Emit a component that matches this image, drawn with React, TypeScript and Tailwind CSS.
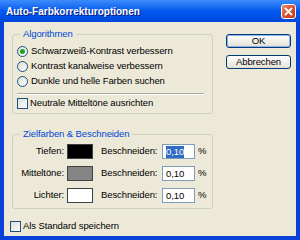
import React from 'react';

const font = "font-['Liberation_Sans',Arial,sans-serif]";

const Radio = ({ checked, label }: { checked?: boolean; label: string }) => (
    <label className="flex items-center h-[15px] gap-[3px]">
        <span className="w-[11px] h-[11px] rounded-full border border-[#1C5180] bg-gradient-to-br from-[#DCDCD7] to-white flex items-center justify-center">
            {checked && <span className="w-[5px] h-[5px] rounded-full bg-[#21A121]" />}
        </span>
        <span>{label}</span>
    </label>
);

const Checkbox = ({ label }: { label: string }) => (
    <label className="flex items-center h-[15px] gap-[2px]">
        <span className="w-[11px] h-[11px] border border-[#1C5180] bg-gradient-to-br from-[#DCDCD7] to-white" />
        <span>{label}</span>
    </label>
);

const ColorRow = ({ label, color, selected }: { label: string; color: string; selected?: boolean }) => (
    <div className="flex items-center h-[15px]">
        <span className="w-[54px] text-right pr-[3px]">{label}</span>
        <span className={`w-[26px] h-[15px] border border-[#404040] ${color}`} />
        <span className="ml-[8px] w-[61px]">Beschneiden:</span>
        <span className="w-[33px] h-[15px] border border-[#7F9DB9] bg-white flex items-center pl-[3px]">
            <span className={selected ? 'bg-[#316AC5] text-white leading-[12px]' : 'leading-[12px]'}>0,10</span>
        </span>
        <span className="ml-[3px]">%</span>
    </div>
);

const App: React.FC = () => {
    return (
        <div className={`w-[300px] h-[240px] bg-[#0842D8] flex flex-col ${font} text-[9.5px] tracking-[-0.1px] text-black`}>
            <div className="h-[22px] shrink-0 flex items-center justify-between pl-[6px] pr-[4px] bg-gradient-to-b from-[#3D8CFA] via-[#0058EE] to-[#0048DC]">
                <span className="text-white font-bold text-[10px] tracking-[0px] [text-shadow:1px_1px_0_#0A1883]">Auto-Farbkorrekturoptionen</span>
                <span className="w-[15px] h-[15px] rounded-[3px] border border-white bg-gradient-to-br from-[#E98B6E] via-[#D9502B] to-[#C23A14] flex items-center justify-center">
                    <svg width="9" height="9" viewBox="0 0 9 9">
                        <path d="M1.5 1.5 L7.5 7.5 M7.5 1.5 L1.5 7.5" stroke="white" strokeWidth="1.8" strokeLinecap="round" />
                    </svg>
                </span>
            </div>
            <div className="flex-1 mx-[4px] mb-[4px] bg-[#ECE9D8] flex">
                <div className="pl-[6px] pt-[6px] w-[209px] flex flex-col">
                    <fieldset className="ml-[2px] w-[201px] border border-[#D0D0BF] rounded-[3px] px-[4px] pb-[2px]">
                        <legend className="ml-[3px] px-[3px] text-[#0046D5] leading-[12px]">Algorithmen</legend>
                        <div className="flex flex-col mt-[4px]">
                            <Radio checked label="Schwarzweiß-Kontrast verbessern" />
                            <Radio label="Kontrast kanalweise verbessern" />
                            <Radio label="Dunkle und helle Farben suchen" />
                            <div className="mt-[4px] mb-[1px] mr-[4px] border-t border-[#ACA899] border-b border-b-white" />
                            <Checkbox label="Neutrale Mitteltöne ausrichten" />
                        </div>
                    </fieldset>
                    <fieldset className="ml-[2px] mt-[14px] w-[201px] border border-[#D0D0BF] rounded-[3px] pb-[5px]">
                        <legend className="ml-[7px] px-[3px] text-[#0046D5] leading-[12px]">Zielfarben &amp; Beschneiden</legend>
                        <div className="flex flex-col gap-[7px] mt-[4px]">
                            <ColorRow label="Tiefen:" color="bg-black" selected />
                            <ColorRow label="Mitteltöne:" color="bg-[#858585]" />
                            <ColorRow label="Lichter:" color="bg-white" />
                        </div>
                    </fieldset>
                    <div className="mt-[10px]">
                        <Checkbox label="Als Standard speichern" />
                    </div>
                </div>
                <div className="ml-[13px] pt-[12px] flex flex-col gap-[7px]">
                    <button className="w-[65px] h-[14px] rounded-[3px] border border-[#003C74] bg-gradient-to-b from-white to-[#E3E1D6] shadow-[inset_0_0_0_1px_#8FB2F2] flex items-center justify-center leading-none">OK</button>
                    <button className="w-[65px] h-[14px] rounded-[3px] border border-[#003C74] bg-gradient-to-b from-white to-[#E3E1D6] flex items-center justify-center leading-none">Abbrechen</button>
                </div>
            </div>
        </div>
    );
};

export default App;
